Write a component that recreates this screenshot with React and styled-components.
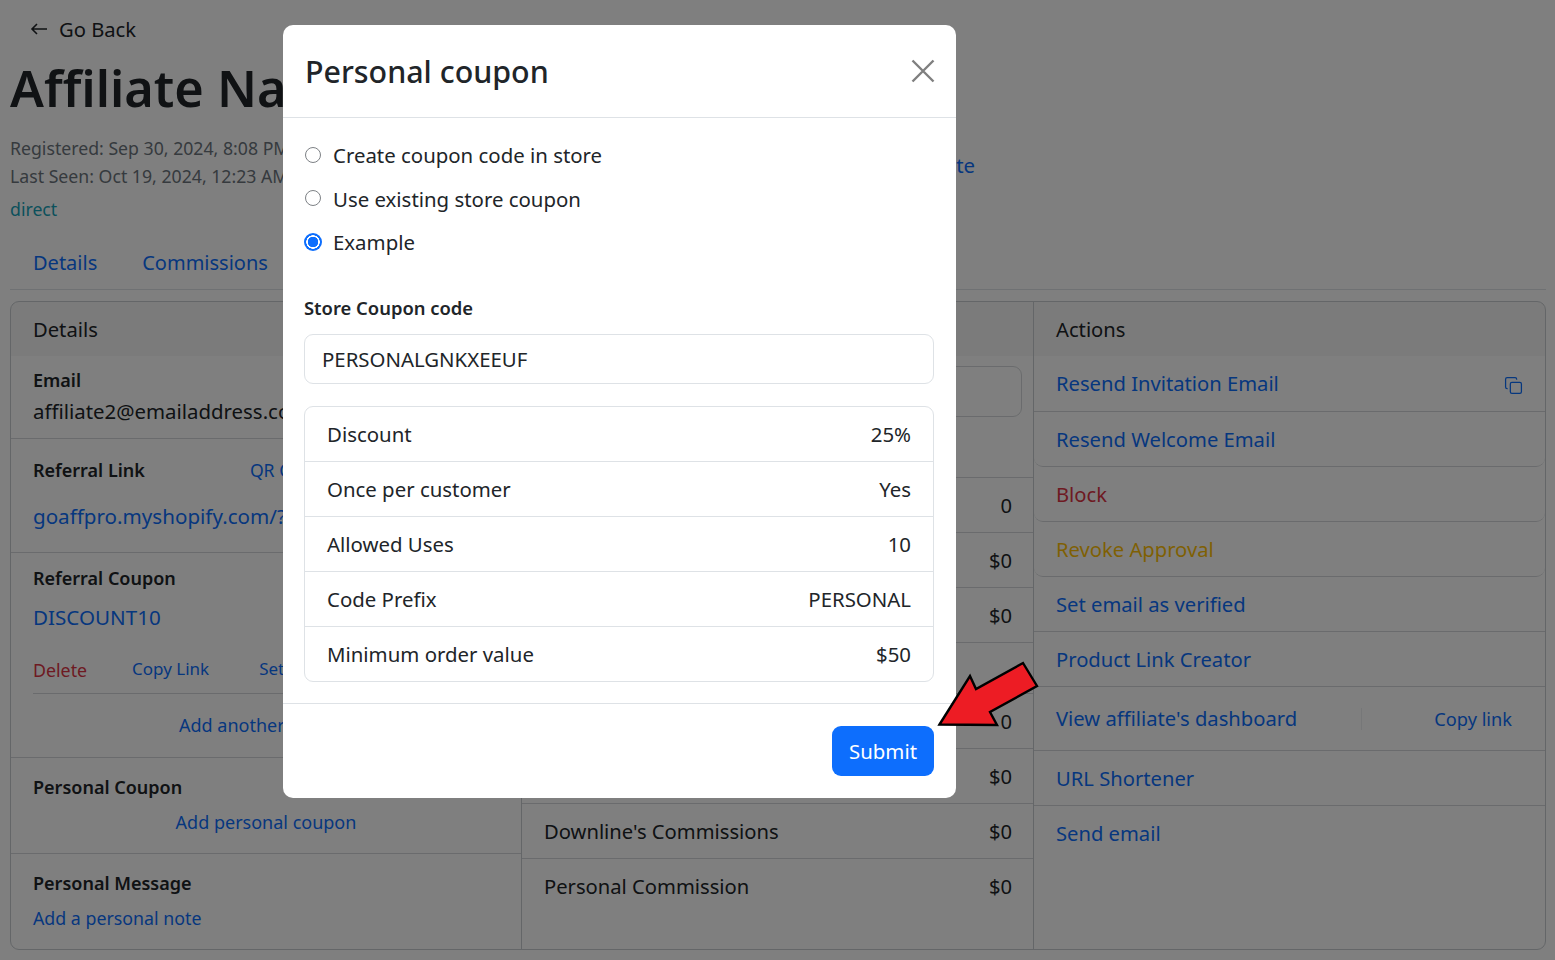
import React from "react";
import styled, { createGlobalStyle } from "styled-components";
import { Copy } from "lucide-react";

const Global = createGlobalStyle`
  html, body { margin: 0; padding: 0; height: 100%; overflow: hidden; background: #fff; }
  body { font-family: "Noto Sans", "Open Sans", sans-serif; color: #212529; font-size: 20.4px; line-height: 1.5; }
  * { box-sizing: border-box; }
`;

const BLUE = "#0d6efd";

const Page = styled.div`
  padding: 0 9px 0 10px;
  height: 960px;
  overflow: hidden;
`;
const BackRow = styled.div`
  display: flex;
  align-items: center;
  gap: 11px;
  padding: 0 0 2px 20px;
  height: 60px;
  font-size: 20.2px;
  svg { display: block; }
`;
const Title = styled.h1`
  margin: -1px 0 0;
  font-size: 50.5px;
  font-weight: 600;
  line-height: 58px;
  height: 58px;
  white-space: nowrap;
`;
const MetaRow = styled.div`
  display: flex;
  justify-content: space-between;
  align-items: center;
  width: 965px;
  margin-top: 17px;
`;
const MetaBlock = styled.div`
  color: #6c757d;
  font-size: 17.7px;
  line-height: 28px;
`;
const Direct = styled.div`
  color: #17a2b8;
  font-size: 17.7px;
  line-height: 28px;
  margin-top: 5px;
`;
const HeadLink = styled.a`
  color: ${BLUE};
  font-size: 20.4px;
  margin-bottom: 26px;
`;
const Tabs = styled.nav`
  display: flex;
  gap: 45px;
  padding: 25px 23px 0;
  height: 67px;
  border-bottom: 1px solid #dee2e6;
  margin-bottom: 11px;
`;
const TabLink = styled.a`
  color: ${BLUE};
  font-size: 20px;
`;
const Card = styled.section`
  display: grid;
  grid-template-columns: 511px 512px 1fr;
  border: 1px solid #c8ccd0;
  border-radius: 9px;
  height: 649px;
  overflow: hidden;
`;
const Column = styled.div`
  border-right: ${(p) => (p.$last ? "none" : "1px solid #c8ccd0")};
  display: flex;
  flex-direction: column;
`;
const ColHead = styled.header`
  height: 54px;
  padding: 0 22px;
  display: flex;
  align-items: center;
  background: rgba(0, 0, 0, 0.03);
  font-size: 20.2px;
  flex: none;
`;
const Section = styled.div`
  height: ${(p) => p.$h}px;
  padding: ${(p) => p.$pt ?? 11}px 22px 0;
  border-bottom: ${(p) => (p.$last ? "none" : "1px solid #d4d7da")};
  flex: none;
  white-space: nowrap;
  overflow: hidden;
`;
const LabelRow = styled.div`
  display: flex;
  gap: 105px;
  align-items: center;
`;
const Label = styled.div`
  font-weight: 600;
  font-size: 18px;
  line-height: 28px;
`;
const Value = styled.div`
  font-size: 20.4px;
  line-height: 32px;
  margin-top: 1px;
`;
const BigLink = styled.a`
  display: block;
  color: ${BLUE};
  font-size: 20.6px;
  line-height: 32px;
  margin-top: ${(p) => p.$mt ?? 0}px;
`;
const SmallLink = styled.a`
  color: ${(p) => p.$color || BLUE};
  font-size: 17.6px;
  line-height: 26px;
`;
const CenterLink = styled.div`
  text-align: center;
  font-size: 18px;
  line-height: 26px;
  margin-top: ${(p) => p.$mt ?? 0}px;
  color: ${BLUE};
`;
const LinkRow = styled.div`
  display: flex;
  gap: 45px;
  margin-top: ${(p) => p.$mt}px;
  padding-bottom: 1px;
  border-bottom: 1px solid #d4d7da;
  height: 48px;
  align-items: center;
`;
const RowLink = styled(SmallLink)`
  font-size: 17px;
  margin-right: ${(p) => p.$mr ?? 0}px;
`;
const DeleteLink = styled(RowLink)`
  font-size: 17.8px;
  margin-top: 2px;
`;
const NoteLink = styled(SmallLink)`
  display: block;
  font-size: 17.8px;
  margin-top: 8px;
`;
const MiddleTop = styled.div`
  height: 122px;
  padding-top: 10px;
  padding-right: 11px;
  border-bottom: 1px solid #d4d7da;
  flex: none;
`;
const FakeInput = styled.div`
  height: 51px;
  margin-left: 11px;
  border: 1px solid #d4d7da;
  border-radius: 9px;
`;
const StatRow = styled.div`
  height: ${(p) => p.$h ?? 55}px;
  padding: 0 21px 0 22px;
  display: flex;
  align-items: center;
  justify-content: space-between;
  border-bottom: ${(p) => (p.$last ? "none" : "1px solid #d4d7da")};
  flex: none;
  font-size: 20.2px;
`;
const ActionRow = styled.div`
  height: ${(p) => p.$h ?? 55}px;
  padding: 0 23px 0 22px;
  display: flex;
  align-items: center;
  justify-content: space-between;
  border-bottom: ${(p) => (p.$last ? "none" : "1px solid #d4d7da")};
  border-radius: ${(p) => (p.$round ? "0 0 9px 9px" : "0")};
  flex: none;
  font-size: 20.2px;
  color: ${(p) => p.$color || BLUE};
`;
const CopyIcon = styled(Copy)`
  display: block;
  margin: 3px -1px 0 0;
`;
const DashLink = styled.span`
  flex: 1;
`;
const DashCopy = styled(SmallLink)`
  font-size: 18.2px;
  margin-right: 10px;
`;
const VRule = styled.span`
  width: 1px;
  height: 22px;
  background: #eceef0;
  margin-right: 72px;
`;
const Overlay = styled.div`
  position: fixed;
  inset: 0;
  background: rgba(0, 0, 0, 0.5);
  padding: 25px 0 0 283px;
`;
const Modal = styled.div`
  position: relative;
  width: 673px;
  height: 773px;
  background: #fff;
  border-radius: 10px;
  display: flex;
  flex-direction: column;
`;
const ModalHead = styled.header`
  height: 93px;
  padding: 2px 22px 0 22px;
  display: flex;
  align-items: center;
  justify-content: space-between;
  border-bottom: 1px solid #dee2e6;
  flex: none;
`;
const ModalTitle = styled.h5`
  margin: 0;
  font-size: 30.4px;
  font-weight: 500;
  line-height: 40px;
`;
const CloseButton = styled.button`
  border: 0;
  background: none;
  padding: 0;
  width: 24px;
  height: 24px;
  margin: -2px -1px 0 0;
  svg { display: block; }
`;
const ModalBody = styled.div`
  flex: 1;
  padding: 16px 22px 0 21px;
`;
const RadioRow = styled.label`
  display: flex;
  align-items: center;
  gap: 12px;
  height: 43.5px;
  font-size: 20.4px;
  color: #212529;
`;
const Radio = styled.input.attrs({ type: "radio" })`
  appearance: none;
  margin: 0 0 2px 1px;
  width: 16px;
  height: 16px;
  border-radius: 50%;
  border: 1px solid #7d8185;
  background: #fff;
  flex: none;
  &:checked {
    border: 0;
    width: 18px;
    height: 18px;
    margin-left: 0;
    margin-right: -1px;
    background: radial-gradient(circle, #0d6efd 0 5px, #fff 5.5px 6.5px, #0d6efd 7px);
  }
`;
const FieldLabel = styled.div`
  font-weight: 600;
  font-size: 18.4px;
  line-height: 28px;
  margin-top: 29px;
`;
const TextField = styled.input`
  display: block;
  width: 100%;
  height: 50px;
  margin-top: 12px;
  padding: 0 17px;
  border: 1px solid #dee2e6;
  border-radius: 9px;
  font: inherit;
  font-size: 20.4px;
  color: #212529;
  background: #fff;
`;
const List = styled.div`
  margin-top: 22px;
  border: 1px solid #dee2e6;
  border-radius: 9px;
  overflow: hidden;
`;
const ListItem = styled.div`
  height: 55px;
  padding: 1px 22px 0;
  display: flex;
  align-items: center;
  justify-content: space-between;
  border-bottom: 1px solid #dee2e6;
  font-size: 20.4px;
  &:last-child { border-bottom: 0; height: 54px; }
`;
const ModalFoot = styled.footer`
  height: 95px;
  padding: 22px;
  border-top: 1px solid #dee2e6;
  display: flex;
  justify-content: flex-end;
  flex: none;
`;
const SubmitButton = styled.button`
  width: 102px;
  height: 50px;
  background: ${BLUE};
  color: #fff;
  border: 0;
  border-radius: 9px;
  font: inherit;
  font-size: 20.4px;
`;
const CalloutArrow = styled.svg`
  position: absolute;
  left: 653px;
  top: 636px;
  width: 104px;
  height: 68px;
  overflow: visible;
`;

const Back = () => (
  <svg width="18" height="14" viewBox="0 0 18 14" fill="none" stroke="#212529" strokeWidth="1.6">
    <path d="M17 7H2M7 2 2 7l5 5" />
  </svg>
);

const coupons = [
  ["Discount", "25%"],
  ["Once per customer", "Yes"],
  ["Allowed Uses", "10"],
  ["Code Prefix", "PERSONAL"],
  ["Minimum order value", "$50"],
];

export default function App() {
  return (
    <>
      <Global />
      <Page>
        <BackRow><Back /> Go Back</BackRow>
        <Title>Affiliate Name</Title>
        <MetaRow>
          <div>
            <MetaBlock>
              Registered: Sep 30, 2024, 8:08 PM<br />
              Last Seen: Oct 19, 2024, 12:23 AM
            </MetaBlock>
            <Direct>direct</Direct>
          </div>
          <HeadLink>Impersonate</HeadLink>
        </MetaRow>
        <Tabs>
          <TabLink>Details</TabLink>
          <TabLink>Commissions</TabLink>
        </Tabs>
        <Card>
          <Column>
            <ColHead>Details</ColHead>
            <Section $h={83} $pt={10}>
              <Label>Email</Label>
              <Value>affiliate2@emailaddress.com</Value>
            </Section>
            <Section $h={114} $pt={17}>
              <LabelRow>
                <Label>Referral Link</Label>
                <SmallLink>QR Code</SmallLink>
              </LabelRow>
              <BigLink $mt={16}>goaffpro.myshopify.com/?ref=affiliate2</BigLink>
            </Section>
            <Section $h={205} $pt={11}>
              <Label>Referral Coupon</Label>
              <BigLink $mt={9}>DISCOUNT10</BigLink>
              <LinkRow $mt={13}>
                <DeleteLink $color="#dc3545">Delete</DeleteLink>
                <RowLink $mr={5}>Copy Link</RowLink>
                <RowLink>Set as default</RowLink>
              </LinkRow>
              <CenterLink $mt={18}>Add another coupon</CenterLink>
            </Section>
            <Section $h={96} $pt={15}>
              <Label>Personal Coupon</Label>
              <CenterLink $mt={8}>Add personal coupon</CenterLink>
            </Section>
            <Section $h={96} $pt={15} $last>
              <Label>Personal Message</Label>
              <NoteLink>Add a personal note</NoteLink>
            </Section>
          </Column>
          <Column>
            <ColHead>Overview</ColHead>
            <MiddleTop><FakeInput /></MiddleTop>
            <StatRow><span>Orders</span><span>0</span></StatRow>
            <StatRow><span>Sales</span><span>$0</span></StatRow>
            <StatRow><span>Commissions</span><span>$0</span></StatRow>
            <StatRow $h={51}></StatRow>
            <StatRow><span>Referrals</span><span>0</span></StatRow>
            <StatRow><span>Downline's Sales</span><span>$0</span></StatRow>
            <StatRow><span>Downline's Commissions</span><span>$0</span></StatRow>
            <StatRow $last><span>Personal Commission</span><span>$0</span></StatRow>
          </Column>
          <Column $last>
            <ColHead>Actions</ColHead>
            <ActionRow $h={56}>Resend Invitation Email <CopyIcon size={19} strokeWidth={1.6} /></ActionRow>
            <ActionRow $round>Resend Welcome Email</ActionRow>
            <ActionRow $round $color="#dc3545">Block</ActionRow>
            <ActionRow $round $color="#ffc107">Revoke Approval</ActionRow>
            <ActionRow>Set email as verified</ActionRow>
            <ActionRow>Product Link Creator</ActionRow>
            <ActionRow $h={64}>
              <DashLink>View affiliate's dashboard</DashLink>
              <VRule />
              <DashCopy>Copy link</DashCopy>
            </ActionRow>
            <ActionRow>URL Shortener</ActionRow>
            <ActionRow $last>Send email</ActionRow>
          </Column>
        </Card>
      </Page>
      <Overlay>
        <Modal>
          <ModalHead>
            <ModalTitle>Personal coupon</ModalTitle>
            <CloseButton aria-label="Close">
              <svg width="24" height="24" viewBox="0 0 24 24" stroke="#7f7f7f" strokeWidth="2.4">
                <path d="M1.5 1.5l21 21M22.5 1.5l-21 21" />
              </svg>
            </CloseButton>
          </ModalHead>
          <ModalBody>
            <RadioRow><Radio name="c" />Create coupon code in store</RadioRow>
            <RadioRow><Radio name="c" />Use existing store coupon</RadioRow>
            <RadioRow><Radio name="c" defaultChecked />Example</RadioRow>
            <FieldLabel>Store Coupon code</FieldLabel>
            <TextField defaultValue="PERSONALGNKXEEUF" />
            <List>
              {coupons.map(([k, v]) => (
                <ListItem key={k}><span>{k}</span><span>{v}</span></ListItem>
              ))}
            </List>
          </ModalBody>
          <ModalFoot><SubmitButton>Submit</SubmitButton></ModalFoot>
          <CalloutArrow viewBox="0 0 104 68">
            <polygon
              points="3.5,63.5 34,15 40,28 87,2 101,25 54,51 61,64"
              fill="#ed1c24"
              stroke="#000"
              strokeWidth="2.4"
              strokeLinejoin="miter"
            />
          </CalloutArrow>
        </Modal>
      </Overlay>
    </>
  );
}
